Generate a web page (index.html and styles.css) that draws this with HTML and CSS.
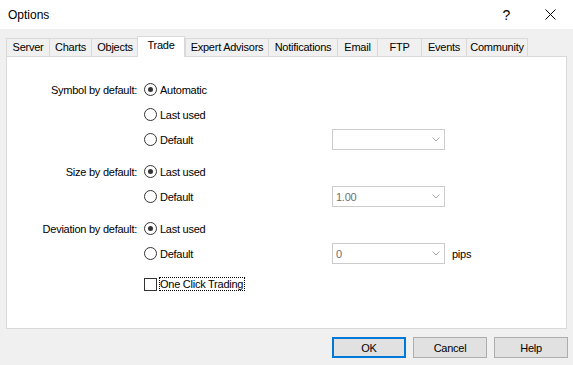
FILE: index.html
```html
<!DOCTYPE html>
<html lang="en">
<head>
  <meta charset="UTF-8">
  <title>Options</title>
  <link rel="stylesheet" href="styles.css">
</head>
<body>
  <div class="dialog">
    <!-- Title bar -->
    <div class="titlebar">
      <span class="title">Options</span>
      <span class="cap-help">?</span>
      <span class="cap-close">
        <svg width="11" height="11" viewBox="0 0 11 11"><path d="M0.5 0.5 L10.5 10.5 M10.5 0.5 L0.5 10.5" stroke="#000" stroke-width="1" fill="none"/></svg>
      </span>
    </div>

    <!-- Tabs -->
    <div class="tabs">
      <div class="tab tab-server">Server</div>
      <div class="tab tab-charts">Charts</div>
      <div class="tab tab-objects">Objects</div>
      <div class="tab tab-trade active">Trade</div>
      <div class="tab tab-experts">Expert Advisors</div>
      <div class="tab tab-notify">Notifications</div>
      <div class="tab tab-email">Email</div>
      <div class="tab tab-ftp">FTP</div>
      <div class="tab tab-events">Events</div>
      <div class="tab tab-community">Community</div>
    </div>

    <!-- Trade page -->
    <div class="panel">
      <div class="group">
        <div class="row">
          <div class="label">Symbol by default:</div>
          <label class="option"><span class="radio checked"></span>Automatic</label>
        </div>
        <div class="row">
          <div></div>
          <label class="option"><span class="radio"></span>Last used</label>
        </div>
        <div class="row">
          <div></div>
          <label class="option"><span class="radio"></span>Default</label>
          <div class="combo">
            <span class="combo-value"></span>
            <svg class="chevron" width="8" height="5" viewBox="0 0 8 5"><path d="M0.5 0.5 L4 4 L7.5 0.5" stroke="#a6a6a6" fill="none"/></svg>
          </div>
        </div>
      </div>

      <div class="group">
        <div class="row">
          <div class="label">Size by default:</div>
          <label class="option"><span class="radio checked"></span>Last used</label>
        </div>
        <div class="row">
          <div></div>
          <label class="option"><span class="radio"></span>Default</label>
          <div class="combo">
            <span class="combo-value">1.00</span>
            <svg class="chevron" width="8" height="5" viewBox="0 0 8 5"><path d="M0.5 0.5 L4 4 L7.5 0.5" stroke="#a6a6a6" fill="none"/></svg>
          </div>
        </div>
      </div>

      <div class="group">
        <div class="row">
          <div class="label">Deviation by default:</div>
          <label class="option"><span class="radio checked"></span>Last used</label>
        </div>
        <div class="row">
          <div></div>
          <label class="option"><span class="radio"></span>Default</label>
          <div class="combo">
            <span class="combo-value">0</span>
            <svg class="chevron" width="8" height="5" viewBox="0 0 8 5"><path d="M0.5 0.5 L4 4 L7.5 0.5" stroke="#a6a6a6" fill="none"/></svg>
          </div>
          <div class="unit">pips</div>
        </div>
      </div>

      <div class="row check-row">
        <div></div>
        <label class="option"><span class="checkbox"></span><span class="focus">One Click Trading</span></label>
      </div>
    </div>

    <!-- Dialog buttons -->
    <div class="buttons">
      <button class="btn default">OK</button>
      <button class="btn">Cancel</button>
      <button class="btn">Help</button>
    </div>
  </div>
</body>
</html>
```

FILE: styles.css
```css
/* General reset */
* {
  margin: 0;
  padding: 0;
  box-sizing: border-box;
}

body {
  font-family: "Liberation Sans", Arial, sans-serif;
  font-size: 11px;
  letter-spacing: -0.25px;
  color: #000;
  background-color: #f0f0f0;
  width: 573px;
  height: 365px;
  overflow: hidden;
}

/* Title bar */
.titlebar {
  display: flex;
  align-items: center;
  height: 29px;
  background: #fff;
}

.title {
  font-size: 12px;
  letter-spacing: 0;
  padding-left: 8px;
  padding-top: 1px;
  flex-grow: 1;
}

.cap-help {
  width: 46px;
  text-align: center;
  padding-left: 5px;
  font-size: 14px;
  letter-spacing: 0;
}

.cap-close {
  width: 46px;
  display: flex;
  justify-content: center;
  padding-left: 1px;
}

/* Tabs */
.tabs {
  display: flex;
  align-items: flex-end;
  margin-top: 7px;
  padding-left: 6px;
  height: 20px;
}

.tab {
  height: 18px;
  line-height: 17px;
  text-align: center;
  white-space: nowrap;
  background: #f0f0f0;
  border: 1px solid #d9d9d9;
  border-bottom: none;
  margin-left: -1px;
}

.tab-server { width: 44px; margin-left: 0; }
.tab-charts { width: 43px; }
.tab-objects { width: 48px; }
.tab-trade { width: 48px; margin-left: -2px; }
.tab-experts { width: 84px; margin-left: 0; }
.tab-notify { width: 70px; }
.tab-email { width: 41px; }
.tab-ftp { width: 45px; }
.tab-events { width: 46px; }
.tab-community { width: 62px; }

.tab.active {
  height: 21px;
  background: #fff;
  padding-bottom: 3px;
  margin-bottom: -1px;
  position: relative;
  z-index: 1;
}

/* Page panel */
.panel {
  margin: 0 6px;
  height: 273px;
  background: #fff;
  border: 1px solid #d9d9d9;
  padding-top: 20px;
}

.group {
  margin-bottom: 7px;
}

.row {
  display: grid;
  grid-template-columns: 137px 188px 113px auto;
  align-items: center;
  height: 25px;
}

.check-row {
  height: 24px;
  margin-top: -1px;
}

.label {
  text-align: right;
  padding-right: 7px;
}

.option {
  display: flex;
  align-items: center;
  gap: 3px;
}

.radio {
  width: 13px;
  height: 13px;
  border: 1px solid #333;
  border-radius: 50%;
  display: flex;
  align-items: center;
  justify-content: center;
}

.radio.checked::after {
  content: "";
  width: 5px;
  height: 5px;
  border-radius: 50%;
  background: #333;
}

.checkbox {
  width: 13px;
  height: 13px;
  border: 1px solid #333;
  margin-right: -1px;
}

.focus {
  border: 1px dotted #000;
  line-height: 12px;
  padding: 0 1px 0 0;
}

/* Disabled combo boxes */
.combo {
  display: flex;
  align-items: center;
  justify-content: space-between;
  height: 21px;
  border: 1px solid #cccccc;
  background: #fff;
  padding: 0 4px 0 3px;
  color: #6d6d6d;
}

.unit {
  padding-left: 7px;
}

/* Dialog buttons */
.buttons {
  display: flex;
  justify-content: flex-end;
  gap: 7px;
  margin-top: 8px;
  padding-right: 5px;
}

.btn {
  width: 74px;
  height: 21px;
  font-family: "Liberation Sans", Arial, sans-serif;
  font-size: 11px;
  letter-spacing: -0.25px;
  color: #000;
  background: #e1e1e1;
  border: 1px solid #adadad;
}

.btn.default {
  border: 2px solid #0078d7;
}
```
